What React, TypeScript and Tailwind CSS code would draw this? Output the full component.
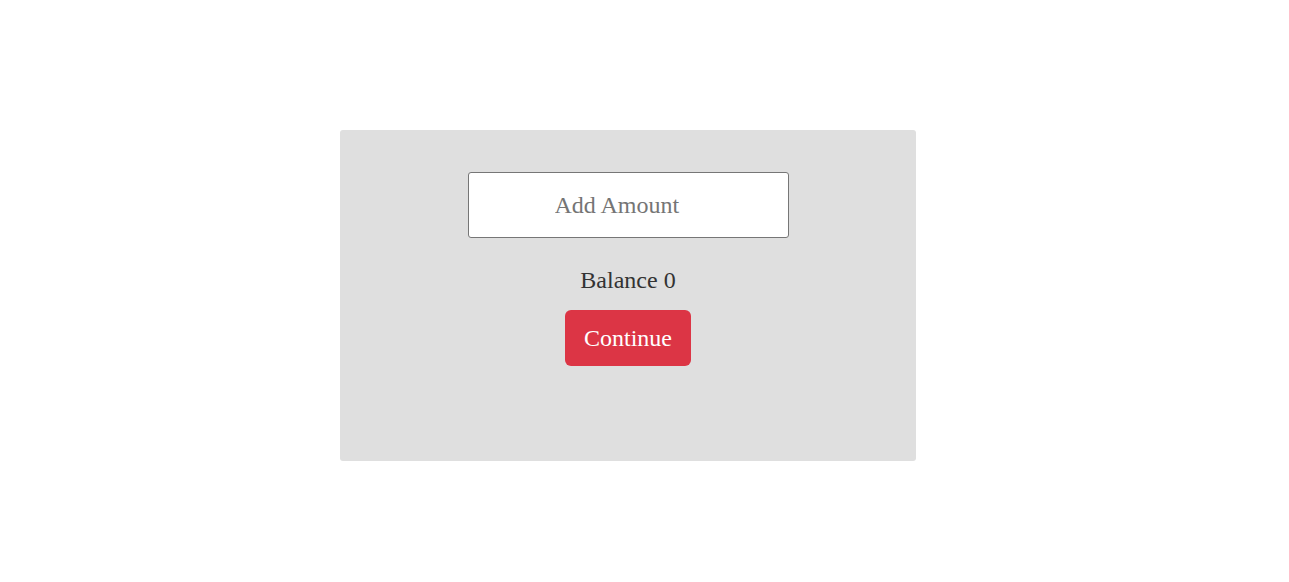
import { useState } from 'react'

export default function App() {
  const [amount, setAmount] = useState('')
  const balance = 0

  return (
    <div className="min-h-[582px] w-full bg-white pt-[130px] pl-[340px] font-['Liberation_Serif',serif]">
      <div className="w-[576px] h-[331px] bg-[#dfdfdf] rounded-[3px] flex flex-col items-center pt-[42px]">
        <input
          type="text"
          value={amount}
          onChange={(e) => setAmount(e.target.value)}
          placeholder="Add Amount"
          className="w-[321px] h-[66px] bg-white border border-[#767676] rounded-[3px] pl-[86px] text-[24px] text-[#333] placeholder:text-[#757575] outline-none"
        />
        <p className="mt-[24px] text-[24px] leading-[36px] text-[#333]">Balance {balance}</p>
        <button className="mt-[12px] bg-[#dc3545] text-white text-[24px] leading-[36px] px-[19px] py-[10px] rounded-[6px]">
          Continue
        </button>
      </div>
    </div>
  )
}
